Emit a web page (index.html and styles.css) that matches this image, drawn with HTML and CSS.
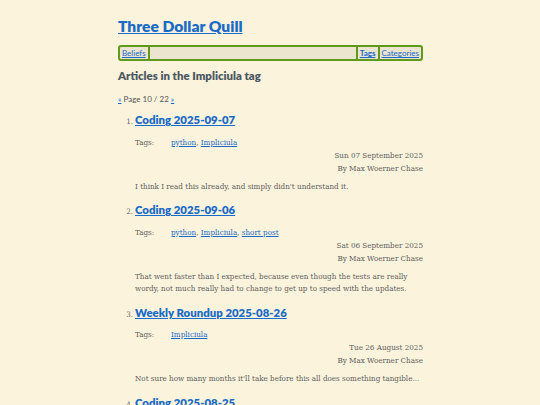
FILE: index.html
```html
<!DOCTYPE html>
<html>
<head>
<meta charset="utf-8">
<link rel="stylesheet" href="styles.css">
</head>
<body>
<div class="page">
  <header class="site-header">
    <h1 class="site-title"><a href="#">Three Dollar Quill</a></h1>
    <nav class="nav">
      <a class="nav-item nav-left" href="#">Beliefs</a>
      <span class="nav-fill"></span>
      <a class="nav-item nav-tags" href="#">Tags</a>
      <a class="nav-item" href="#">Categories</a>
    </nav>
  </header>
  <main>
    <h2 class="page-heading">Articles in the Impliciula tag</h2>
    <p class="pager"><a href="#">«</a> Page 10 / 22 <a href="#">»</a></p>
    <ol class="articles" start="1">
      <li class="article">
        <h3 class="article-title"><a href="#">Coding 2025-09-07</a></h3>
        <div class="tags"><span class="tags-label">Tags:</span><span><a href="#">python</a>, <a href="#">Impliciula</a></span></div>
        <div class="meta">Sun 07 September 2025<br>By Max Woerner Chase</div>
        <p class="summary">I think I read this already, and simply didn't understand it.</p>
      </li>
      <li class="article">
        <h3 class="article-title"><a href="#">Coding 2025-09-06</a></h3>
        <div class="tags"><span class="tags-label">Tags:</span><span><a href="#">python</a>, <a href="#">Impliciula</a>, <a href="#">short post</a></span></div>
        <div class="meta">Sat 06 September 2025<br>By Max Woerner Chase</div>
        <p class="summary">That went faster than I expected, because even though the tests are really wordy, not much really had to change to get up to speed with the updates.</p>
      </li>
      <li class="article">
        <h3 class="article-title"><a href="#">Weekly Roundup 2025-08-26</a></h3>
        <div class="tags"><span class="tags-label">Tags:</span><span><a href="#">Impliciula</a></span></div>
        <div class="meta">Tue 26 August 2025<br>By Max Woerner Chase</div>
        <p class="summary">Not sure how many months it'll take before this all does something tangible...</p>
      </li>
      <li class="article">
        <h3 class="article-title"><a href="#">Coding 2025-08-25</a></h3>
      </li>
    </ol>
  </main>
</div>
</body>
</html>
```
FILE: styles.css
```css
html, body {
  margin: 0;
  padding: 0;
  background: #fcf3dc;
}
body {
  font-family: "DejaVu Serif", serif;
  font-stretch: condensed;
  color: #5e5e5e;
  font-size: 8px;
}
.page {
  width: 305px;
  margin: 0 auto;
  padding-top: 15px;
  padding-left: 1px;
}
a { color: #1a6bc7; }
.site-title {
  font-family: Lato, sans-serif;
  font-stretch: normal;
  font-weight: 800;
  font-size: 15.6px;
  line-height: 22px;
  margin: 0 0 8px 0;
}
.nav {
  display: flex;
  align-items: stretch;
  border: 2px solid #5f9a1c;
  border-radius: 3px;
  background: #ebe4cf;
  font-family: Lato, sans-serif;
  font-stretch: normal;
  font-size: 8px;
  line-height: 12px;
  height: 12px;
}
.nav-item {
  padding: 0 2px;
}
.nav-left { border-right: 2px solid #5f9a1c; }
.nav-fill { flex: 1; }
.nav-tags {
  font-weight: 700;
  border-left: 2px solid #5f9a1c;
  border-right: 2px solid #5f9a1c;
}
.page-heading {
  font-family: Lato, sans-serif;
  font-stretch: normal;
  font-weight: 800;
  font-size: 11.4px;
  line-height: 16px;
  color: #4c5963;
  margin: 7px 0 0 0;
}
.pager {
  font-family: Lato, sans-serif;
  font-stretch: normal;
  margin: 9px 0 0 0;
  line-height: 12px;
  font-size: 8px;
  color: #555;
}
.articles {
  margin: 7px 0 0 0;
  padding-left: 17px;
}
.article {
  font-size: 8px;
}
.article + .article {
  margin-top: 9px;
}
.article::marker {
  font-size: 7.5px;
}
.article-title {
  font-family: Lato, sans-serif;
  font-stretch: normal;
  font-weight: 800;
  font-size: 11.4px;
  line-height: 16px;
  margin: 0;
}
.tags {
  display: flex;
  margin-top: 7.5px;
  line-height: 13px;
}
.tags-label { width: 36px; }
.meta {
  text-align: right;
  line-height: 13px;
}
.summary {
  margin: 6px 0 0 0;
  line-height: 12.5px;
}
```
